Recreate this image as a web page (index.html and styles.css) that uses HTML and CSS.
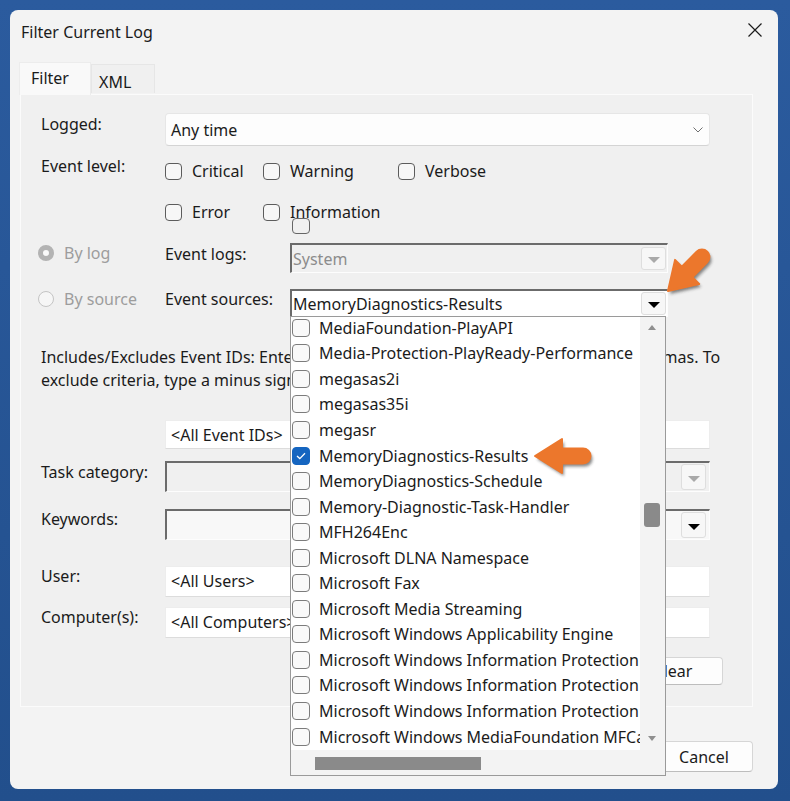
FILE: index.html
```html
<!DOCTYPE html>
<html lang="en">
<head>
    <meta charset="UTF-8">
    <title>Filter Current Log</title>
    <link rel="stylesheet" href="styles.css">
</head>
<body>
<div class="desktop">
    <div class="dialog">
        <!-- Title bar -->
        <div class="titlebar">
            <span class="title">Filter Current Log</span>
            <svg class="close" width="14" height="14" viewBox="0 0 14 14">
                <path d="M0.5 0.5 L13.5 13.5 M13.5 0.5 L0.5 13.5" stroke="#1b1b1b" stroke-width="1.2" fill="none"/>
            </svg>
        </div>

        <!-- Tabs -->
        <div class="tabs">
            <div class="tab active">Filter</div>
            <div class="tab xml">XML</div>
        </div>

        <!-- Filter panel -->
        <div class="panel">
            <div class="row row-logged">
                <span class="lbl">Logged:</span>
                <div class="combo modern">
                    <span>Any time</span>
                    <svg class="chev" width="10" height="6" viewBox="0 0 10 6"><path d="M0.5 0.5 L5 5 L9.5 0.5" stroke="#707070" fill="none"/></svg>
                </div>
            </div>

            <div class="row row-level">
                <span class="lbl">Event level:</span>
                <div class="levels">
                    <span class="check"><i class="box"></i>Critical</span>
                    <span class="check"><i class="box"></i>Warning</span>
                    <span class="check"><i class="box"></i>Verbose</span>
                    <span class="check"><i class="box"></i>Error</span>
                    <span class="check"><i class="box"></i>Information</span>
                </div>
            </div>

            <div class="row row-log">
                <span class="opt disabled"><i class="radio on"></i>By log</span>
                <span class="lbl2">Event logs:</span>
                <div class="combo sunken off">
                    <span>System</span>
                    <span class="dd"><i class="tri grey"></i></span>
                </div>
            </div>

            <div class="row row-source">
                <span class="opt disabled"><i class="radio"></i>By source</span>
                <span class="lbl2">Event sources:</span>
                <div class="combo sunken">
                    <span>MemoryDiagnostics-Results</span>
                    <span class="dd"><i class="tri"></i></span>
                </div>
            </div>

            <p class="desc">Includes/Excludes Event IDs: Enter ID numbers and/or ID ranges separated by commas. To<br>exclude criteria, type a minus sign first. For example 1,3,5-99,-76</p>

            <div class="row row-ids">
                <span class="lbl"></span>
                <div class="field">&lt;All Event IDs&gt;</div>
            </div>

            <div class="row row-task">
                <span class="lbl">Task category:</span>
                <div class="combo sunken wide off">
                    <span></span>
                    <span class="dd big"><i class="tri grey"></i></span>
                </div>
            </div>

            <div class="row row-keys">
                <span class="lbl">Keywords:</span>
                <div class="combo sunken wide keys">
                    <span></span>
                    <span class="dd big"><i class="tri"></i></span>
                </div>
            </div>

            <div class="row row-user">
                <span class="lbl">User:</span>
                <div class="field">&lt;All Users&gt;</div>
            </div>

            <div class="row row-comp">
                <span class="lbl">Computer(s):</span>
                <div class="field">&lt;All Computers&gt;</div>
            </div>

            <div class="row row-clear">
                <button class="btn clear">Clear</button>
            </div>
        </div>

        <div class="footer">
            <button class="btn">OK</button>
            <button class="btn">Cancel</button>
        </div>

        <!-- stray checkbox drawn over the level row -->
        <i class="box stray"></i>

        <!-- Open drop-down list of event sources -->
        <div class="droplist">
            <div class="items">
                <div class="item"><i class="box"></i>MediaFoundation-PlayAPI</div>
                <div class="item"><i class="box"></i>Media-Protection-PlayReady-Performance</div>
                <div class="item"><i class="box"></i>megasas2i</div>
                <div class="item"><i class="box"></i>megasas35i</div>
                <div class="item"><i class="box"></i>megasr</div>
                <div class="item"><i class="box checked"><svg width="10" height="8" viewBox="0 0 10 8"><path d="M1 4 L3.8 6.6 L9 1.2" stroke="#fff" stroke-width="1.3" fill="none"/></svg></i>MemoryDiagnostics-Results</div>
                <div class="item"><i class="box"></i>MemoryDiagnostics-Schedule</div>
                <div class="item"><i class="box"></i>Memory-Diagnostic-Task-Handler</div>
                <div class="item"><i class="box"></i>MFH264Enc</div>
                <div class="item"><i class="box"></i>Microsoft DLNA Namespace</div>
                <div class="item"><i class="box"></i>Microsoft Fax</div>
                <div class="item"><i class="box"></i>Microsoft Media Streaming</div>
                <div class="item"><i class="box"></i>Microsoft Windows Applicability Engine</div>
                <div class="item"><i class="box"></i>Microsoft Windows Information Protection Audit</div>
                <div class="item"><i class="box"></i>Microsoft Windows Information Protection Enforcement</div>
                <div class="item"><i class="box"></i>Microsoft Windows Information Protection Learning</div>
                <div class="item"><i class="box"></i>Microsoft Windows MediaFoundation MFCaptureEngine</div>
            </div>
            <div class="vscroll">
                <i class="arr up"></i>
                <i class="thumb"></i>
                <i class="arr down"></i>
            </div>
            <div class="hscroll"><i class="hthumb"></i></div>
            <div class="corner"></div>
        </div>

        <!-- Orange pointer arrows -->
        <svg class="marks" width="768" height="779" viewBox="0 0 768 779">
            <defs>
                <filter id="blur" x="-30%" y="-30%" width="160%" height="160%"><feGaussianBlur stdDeviation="1.6"/></filter>
                <path id="arrow" d="M0 0 L27 -17 L27 -7.5 L48 -7.5 A7.5 7.5 0 0 1 48 7.5 L27 7.5 L27 17 Z"/>
            </defs>
            <g transform="translate(660 284) rotate(-45)"><use href="#arrow" fill="#222" opacity="0.55" filter="url(#blur)"/></g>
            <g transform="translate(658 281) rotate(-45)"><use href="#arrow" fill="#ec772c" stroke="#ec772c" stroke-width="2" stroke-linejoin="round"/></g>
            <g transform="translate(527 449)"><use href="#arrow" fill="#222" opacity="0.55" filter="url(#blur)"/></g>
            <g transform="translate(525 446)"><use href="#arrow" fill="#ec772c" stroke="#ec772c" stroke-width="2" stroke-linejoin="round"/></g>
        </svg>
    </div>
</div>
</body>
</html>
```

FILE: styles.css
```css
/* Base */
* {
    margin: 0;
    padding: 0;
    box-sizing: border-box;
}

body {
    font-family: "Noto Sans", "Open Sans", sans-serif;
    font-size: 16px;
    line-height: 20px;
    color: #1b1b1b;
    width: 790px;
    height: 801px;
    overflow: hidden;
}

.desktop {
    height: 801px;
    padding: 10px;
    background: linear-gradient(#2b5b9e, #224f8c);
}

/* Dialog window */
.dialog {
    position: relative;
    width: 768px;
    height: 779px;
    background: #f3f3f3;
    border-radius: 8px;
}

.titlebar {
    height: 52px;
    display: flex;
    align-items: flex-start;
    justify-content: space-between;
    padding: 12px 16px 0 11px;
}

.title {
    font-size: 16px;
}

.close {
    margin-top: 1px;
}

/* Tabs */
.tabs {
    height: 32px;
    display: flex;
    align-items: flex-start;
    padding-left: 9px;
    position: relative;
    z-index: 1;
}

.tab {
    height: 29px;
    margin-top: 2px;
    padding: 7px 0 0 7px;
    width: 64px;
    border: 1px solid #e6e6e6;
    border-bottom: none;
    background: #f0f0f0;
}

.tab.active {
    height: 33px;
    margin-top: 0;
    width: 72px;
    padding: 5px 0 0 11px;
    background: #f9f9f9;
    border-color: #ececec;
}

.panel {
    margin-left: 10px;
    width: 733px;
    height: 613px;
    border: 1px solid #fbfbfb;
    background: #f0f0f0;
    padding-left: 20px;
}

/* Rows */
.row {
    display: flex;
    align-items: flex-start;
}

.lbl {
    width: 124px;
    flex-shrink: 0;
}

.lbl2 {
    width: 125px;
    flex-shrink: 0;
}

.row-logged { margin-top: 18px; height: 33px; }
.row-logged .lbl { padding-top: 1px; }
.row-level { margin-top: 10px; }
.row-log { margin-top: 16px; height: 30px; }
.row-log .lbl2 { padding-top: 1px; }
.row-source { margin-top: 16px; height: 28px; }
.row-ids { margin-top: 28px; height: 29px; }
.row-task { margin-top: 12px; height: 31px; }
.row-task .lbl { padding-top: 1px; }
.row-keys { margin-top: 17px; height: 31px; }
.row-user { margin-top: 26px; height: 31px; }
.row-comp { margin-top: 10px; height: 31px; }
.row-clear { margin-top: 19px; justify-content: flex-end; padding-right: 29px; }

/* Checkboxes */
.levels {
    display: grid;
    grid-template-columns: 98px 135px auto;
    grid-auto-rows: 30px;
    row-gap: 11px;
}

.check {
    display: flex;
    align-items: center;
    gap: 10px;
}

.box {
    display: inline-flex;
    align-items: center;
    justify-content: center;
    width: 17px;
    height: 17px;
    flex-shrink: 0;
    border: 1px solid #5c5c5c;
    border-radius: 4px;
    background: #f7f7f7;
}

.box.stray {
    position: absolute;
    left: 282px;
    top: 208px;
    width: 18px;
    height: 16px;
    border-color: #666;
    background: transparent;
}

/* Radio options */
.opt {
    width: 127px;
    flex-shrink: 0;
    display: flex;
    align-items: center;
    gap: 10px;
    margin-left: -3px;
}

.opt.disabled {
    color: #9d9d9d;
}

.radio {
    width: 16px;
    height: 16px;
    border-radius: 50%;
    border: 1px solid #c4c4c4;
    background: #f6f6f6;
}

.radio.on {
    border: 5px solid #b3b3b3;
    background: #fafafa;
}

/* Combos and fields */
.combo {
    display: flex;
    align-items: center;
    justify-content: space-between;
    height: 100%;
}

.combo.modern {
    width: 545px;
    background: #fdfdfd;
    border: 1px solid #e6e6e6;
    border-bottom-color: #d4d4d4;
    border-radius: 4px;
    padding: 0 6px 0 5px;
}

.combo.sunken {
    width: 378px;
    background: #fff;
    border-top: 2px solid #6b6b6b;
    border-left: 2px solid #6b6b6b;
    border-right: 1px solid #fdfdfd;
    border-bottom: 1px solid #fdfdfd;
    padding-left: 1px;
}

.combo.wide {
    width: 545px;
}

.combo.off {
    background: #f0f0f0;
    color: #8c8c8c;
}

.combo.keys {
    background: #f8f8f8;
}

.dd {
    width: 25px;
    height: 23px;
    margin-right: 1px;
    display: flex;
    align-items: center;
    justify-content: center;
    border: 1px solid #dedede;
    border-radius: 3px;
    background: #f7f7f7;
}

.dd.big {
    height: 26px;
    margin-right: 3px;
}

.tri {
    width: 0;
    height: 0;
    border-left: 6px solid transparent;
    border-right: 6px solid transparent;
    border-top: 6px solid #000;
    margin-top: 3px;
}

.tri.grey {
    border-top-color: #a9a9a9;
}

.field {
    width: 545px;
    height: 100%;
    background: #fff;
    border: 1px solid #ededed;
    border-bottom-color: #dcdcdc;
    padding: 4px 0 0 5px;
}

.desc {
    margin-top: 29px;
    line-height: 23px;
    white-space: nowrap;
}

/* Buttons */
.btn {
    font: inherit;
    color: #1b1b1b;
    background: #fdfdfd;
    border: 1px solid #d6d6d6;
    border-bottom-color: #bdbdbd;
    border-radius: 4px;
}

.btn.clear {
    width: 100px;
    height: 28px;
}

.footer {
    display: flex;
    justify-content: flex-end;
    gap: 8px;
    margin-top: 34px;
    padding-right: 25px;
}

.footer .btn {
    width: 98px;
    height: 31px;
}

/* Drop-down list overlay */
.droplist {
    position: absolute;
    left: 280px;
    top: 306px;
    width: 376px;
    height: 460px;
    border: 1px solid #9a9a9a;
    background: #f0f0f0;
    display: grid;
    grid-template-columns: 349px 25px;
    grid-template-rows: 433px 25px;
}

.items {
    background: #fff;
    overflow: hidden;
}

.item {
    height: 25.56px;
    display: flex;
    align-items: center;
    gap: 9px;
    padding-left: 1px;
    white-space: nowrap;
}

.items .item:first-child {
    margin-top: -2px;
}

.item .box {
    width: 18px;
    height: 18px;
    border-color: #7c7c7c;
    background: #f9f9f9;
}

.item .box.checked {
    background: #1565c0;
    border-color: #1565c0;
}

.vscroll {
    position: relative;
    background: #f3f3f3;
}

.arr {
    position: absolute;
    left: 8px;
    width: 0;
    height: 0;
    border-left: 4px solid transparent;
    border-right: 4px solid transparent;
}

.arr.up {
    top: 8px;
    border-bottom: 5px solid #8f8f8f;
}

.arr.down {
    bottom: 9px;
    border-top: 5px solid #8f8f8f;
}

.thumb {
    position: absolute;
    left: 4px;
    top: 186px;
    width: 16px;
    height: 24px;
    border-radius: 3px;
    background: #8a8a8a;
}

.hscroll {
    position: relative;
    background: #f3f3f3;
}

.hthumb {
    position: absolute;
    left: 24px;
    top: 7px;
    width: 166px;
    height: 13px;
    background: #8a8a8a;
}

.corner {
    background: #f3f3f3;
}

/* Annotation arrows */
.marks {
    position: absolute;
    left: 0;
    top: 0;
    pointer-events: none;
}
```
